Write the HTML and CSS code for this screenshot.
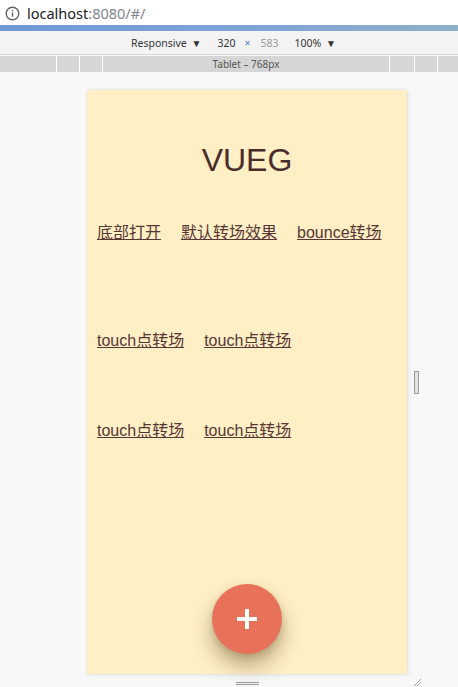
FILE: index.html
```html
<!DOCTYPE html>
<html lang="zh">
<head>
<meta charset="utf-8">
<title>VUEG</title>
<link rel="stylesheet" href="styles.css">
</head>
<body>
<div class="addr">
  <svg class="info" width="15" height="15" viewBox="0 0 15 15"><circle cx="7.5" cy="7.5" r="6.3" fill="none" stroke="#5f6368" stroke-width="1.4"/><rect x="6.8" y="6.4" width="1.4" height="4.4" fill="#5f6368"/><rect x="6.8" y="3.9" width="1.4" height="1.4" fill="#5f6368"/></svg>
  <span class="host">localhost</span><span class="path">:8080/#/</span>
</div>
<div class="progress"></div>
<div class="toolbar">
  <span class="tb-item">Responsive <span class="caret">▼</span></span>
  <span class="tb-num">320</span>
  <span class="tb-x">×</span>
  <span class="tb-dim">583</span>
  <span class="tb-item">100% <span class="caret">▼</span></span>
</div>
<div class="mqbar">
  <div class="seg s1"></div>
  <div class="seg s2"></div>
  <div class="seg s2"></div>
  <div class="seg label">Tablet – 768px</div>
  <div class="seg s3"></div>
  <div class="seg s2"></div>
  <div class="seg s4"></div>
</div>
<div class="stage">
  <div class="device-row">
    <div class="device">
      <h1 class="title">VUEG</h1>
      <nav class="row row-first">
        <a href="#">底部打开</a>
        <a href="#">默认转场效果</a>
        <a href="#">bounce转场</a>
      </nav>
      <nav class="row row-second">
        <a href="#">touch点转场</a>
        <a href="#">touch点转场</a>
      </nav>
      <nav class="row row-third">
        <a href="#">touch点转场</a>
        <a href="#">touch点转场</a>
      </nav>
      <button class="fab" type="button" aria-label="add"></button>
    </div>
    <div class="vhandle"></div>
  </div>
  <div class="bottom-row">
    <div class="hhandle"></div>
    <svg class="corner" width="8" height="8" viewBox="0 0 8 8"><path d="M1 8 L8 1 M4 8 L8 4" stroke="#a0a0a0" stroke-width="1" fill="none"/></svg>
  </div>
</div>
</body>
</html>
```
FILE: styles.css
```css
* { box-sizing: border-box; }
html, body { margin: 0; padding: 0; }
body {
  width: 458px;
  height: 687px;
  overflow: hidden;
  background: #f8f8f8;
  font-family: "Noto Sans", "Open Sans", sans-serif;
}
.addr {
  height: 25px;
  background: #ffffff;
  display: flex;
  align-items: center;
  padding-left: 5px;
  font-size: 14.5px;
}
.info { margin-right: 7px; margin-top: 1px; }
.host { color: #202124; }
.path { color: #80868b; }
.progress {
  height: 6px;
  background: linear-gradient(90deg, #6e98d6 0%, #7ea3d6 55%, #8fb0c8 100%);
}
.toolbar {
  height: 24px;
  background: #f3f3f3;
  border-bottom: 1px solid #dcdcdc;
  display: flex;
  align-items: center;
  padding-left: 131px;
  font-size: 10.5px;
  color: #333;
}
.tb-item { margin-right: 16px; white-space: nowrap; }
.caret { font-size: 10px; margin-left: 2px; }
.tb-num { margin-right: 9px; }
.tb-x { color: #4a7ec9; margin-right: 10px; }
.tb-dim { color: #999; margin-right: 16px; }
.mqbar {
  margin-top: 1px;
  height: 16px;
  display: flex;
  gap: 1px;
  background: #ffffff;
}
.seg { background: #d6d6d6; height: 16px; }
.s1 { width: 56px; }
.s2 { width: 22px; }
.s3 { width: 24px; }
.s4 { flex: 1; }
.label {
  width: 286px;
  text-align: center;
  font-size: 10px;
  line-height: 16px;
  color: #555;
}
.stage {
  padding-top: 18px;
  padding-left: 87px;
}
.device-row {
  display: flex;
  align-items: center;
  gap: 7px;
}
.device {
  position: relative;
  width: 320px;
  height: 584px;
  background: #ffefc5;
  box-shadow: 0 0 2px rgba(0,0,0,0.12), 2px 1px 6px rgba(0,0,0,0.06);
  padding-top: 52px;
  font-family: "Liberation Sans", "Noto Sans CJK SC", sans-serif;
}
.title {
  margin: 0;
  text-align: center;
  font-size: 32px;
  line-height: 36px;
  font-weight: normal;
  color: #4a2c2a;
}
.row {
  display: flex;
  gap: 20px;
  padding-left: 10px;
  font-size: 16px;
  line-height: 20px;
}
.row a { color: #583634; text-decoration: underline; }
.row-first { margin-top: 45px; }
.row-second { margin-top: 88px; }
.row-third { margin-top: 70px; }
.fab {
  position: absolute;
  left: 125px;
  bottom: 20px;
  width: 70px;
  height: 70px;
  border: 0;
  padding: 0;
  border-radius: 50%;
  background: #e8715a;
  box-shadow: 0 12px 20px rgba(80, 60, 20, 0.4), 0 3px 6px rgba(80,60,20,0.15);
}
.fab::before, .fab::after {
  content: "";
  position: absolute;
  background: #ffffff;
  left: 25px;
  top: 33px;
  width: 20px;
  height: 4px;
}
.fab::after {
  left: 33px;
  top: 25px;
  width: 4px;
  height: 20px;
}
.vhandle {
  width: 5px;
  height: 23px;
  border: 1px solid #9a9a9a;
  background: #e4e4e4;
}
.bottom-row {
  display: flex;
  align-items: flex-start;
  height: 12px;
  padding-top: 8px;
}
.hhandle {
  margin-left: 149px;
  width: 23px;
  height: 3px;
  border-top: 1px solid #9a9a9a;
  border-bottom: 1px solid #9a9a9a;
}
.corner { margin-left: 154px; margin-top: -4px; }
```
